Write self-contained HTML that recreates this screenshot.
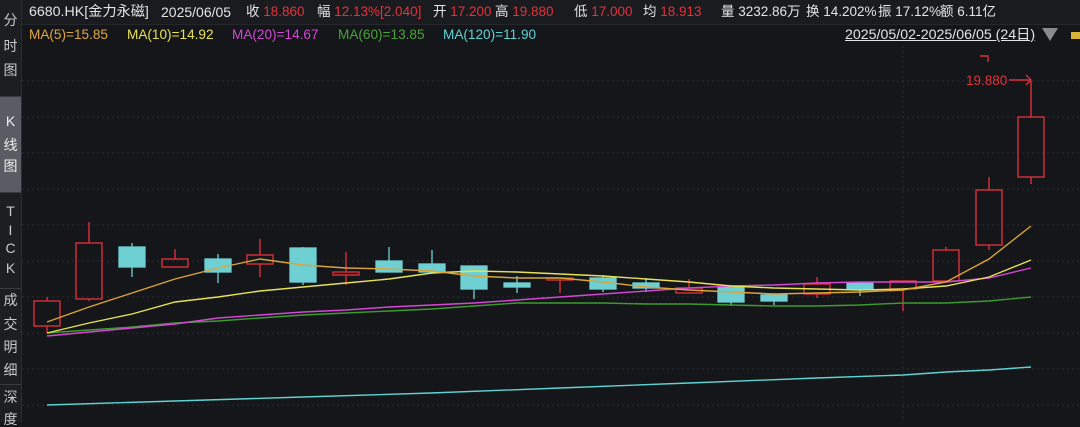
<!DOCTYPE html>
<html><head><meta charset="utf-8"><style>
body{margin:0;width:1080px;height:422px;background:#15161a;overflow:hidden;position:relative;font-family:"Liberation Sans","Noto Sans CJK SC",sans-serif}
#side{position:absolute;left:0;top:0;width:21px;height:422px;background:#1d1e22;border-right:1px solid #2c2d32}
.c{position:absolute;left:0;width:21px;text-align:center;color:#c9c9cc;font-size:14px;line-height:14px}
.h{position:absolute;top:0;font-size:13.5px;line-height:24px;color:#e4e4e6;white-space:nowrap}
.r{color:#e2323a}
.m{position:absolute;top:26px;font-size:13.6px;line-height:18px;white-space:nowrap}
</style></head><body>
<div style="position:absolute;left:22px;top:0;width:1058px;height:24px;background:#1a1b1f;border-bottom:1px solid #26272c"></div>
<div id="side">
<div style="position:absolute;top:97px;height:95px;left:0;width:21px;background:#5b5c63"></div>
<div style="position:absolute;top:96px;width:21px;height:1px;background:#3a3b40"></div>
<div style="position:absolute;top:192px;width:21px;height:1px;background:#3a3b40"></div>
<div style="position:absolute;top:288px;width:21px;height:1px;background:#3a3b40"></div>
<div style="position:absolute;top:384px;width:21px;height:1px;background:#3a3b40"></div>
<div class="c" style="top:13px">分</div><div class="c" style="top:39px">时</div><div class="c" style="top:63px">图</div>
<div class="c" style="top:114px;color:#eee">K</div><div class="c" style="top:138px;color:#eee">线</div><div class="c" style="top:159px;color:#eee">图</div>
<div class="c" style="top:204px">T</div><div class="c" style="top:223px">I</div><div class="c" style="top:241px">C</div><div class="c" style="top:261px">K</div>
<div class="c" style="top:293px">成</div><div class="c" style="top:317px">交</div><div class="c" style="top:340px">明</div><div class="c" style="top:363px">细</div>
<div class="c" style="top:390px">深</div><div class="c" style="top:412px">度</div>
</div>
<span class="h" style="left:29px;font-size:14.2px">6680.HK[金力永磁]</span>
<span class="h" style="left:161px;font-size:14px">2025/06/05</span>
<span class="h" style="left:246px">收 <span class="r">18.860</span></span>
<span class="h" style="left:317px">幅 <span class="r">12.13%[2.040]</span></span>
<span class="h" style="left:433px">开 <span class="r">17.200</span></span>
<span class="h" style="left:495px">高 <span class="r">19.880</span></span>
<span class="h" style="left:574px">低 <span class="r">17.000</span></span>
<span class="h" style="left:643px">均 <span class="r">18.913</span></span>
<span class="h" style="left:721px">量 3232.86万</span>
<span class="h" style="left:806px">换 14.202%</span>
<span class="h" style="left:878px">振 17.12%</span>
<span class="h" style="left:940px">额 6.11亿</span>
<span class="m" style="left:29px;color:#e0a83c">MA(5)=15.85</span>
<span class="m" style="left:127px;color:#e6e157">MA(10)=14.92</span>
<span class="m" style="left:232px;color:#d447d4">MA(20)=14.67</span>
<span class="m" style="left:338px;color:#4aa33a">MA(60)=13.85</span>
<span class="m" style="left:443px;color:#5fd3d3">MA(120)=11.90</span>
<span class="m" style="left:845px;color:#e4e4e6;text-decoration:underline;font-size:14.2px">2025/05/02-2025/06/05 (24日)</span>
<svg style="position:absolute;left:0;top:0" width="1080" height="422">
<polygon points="1042,28 1058,28 1050,41" fill="#8a8a8e"/>
<rect x="1071" y="32" width="9" height="7" fill="#d9b23a"/>
<g stroke="#2b2c31" stroke-dasharray="2,3" stroke-width="1">
<line x1="22" y1="81" x2="1080" y2="81"/><line x1="22" y1="117" x2="1080" y2="117"/><line x1="22" y1="153" x2="1080" y2="153"/><line x1="22" y1="189" x2="1080" y2="189"/><line x1="22" y1="225" x2="1080" y2="225"/><line x1="22" y1="261" x2="1080" y2="261"/><line x1="22" y1="297" x2="1080" y2="297"/><line x1="22" y1="333" x2="1080" y2="333"/><line x1="22" y1="369" x2="1080" y2="369"/><line x1="22" y1="405" x2="1080" y2="405"/>
<line x1="903" y1="46" x2="903" y2="422"/>
</g>
<g fill="#6fd0d4" stroke="#6fd0d4" stroke-width="1.3">
<line x1="132" y1="243" x2="132" y2="277"/><rect x="119" y="247" width="26" height="20"/>
<line x1="218" y1="254" x2="218" y2="283"/><rect x="205" y="259" width="26" height="13"/>
<line x1="303" y1="247" x2="303" y2="285"/><rect x="290" y="248" width="26" height="34"/>
<line x1="389" y1="247" x2="389" y2="272"/><rect x="376" y="261" width="26" height="11"/>
<line x1="432" y1="250" x2="432" y2="274"/><rect x="419" y="264" width="26" height="8"/>
<line x1="474" y1="266" x2="474" y2="299"/><rect x="461" y="266" width="26" height="23"/>
<line x1="517" y1="276" x2="517" y2="293"/><rect x="504" y="283" width="26" height="4"/>
<line x1="603" y1="275" x2="603" y2="292"/><rect x="590" y="278" width="26" height="11"/>
<line x1="646" y1="278" x2="646" y2="292"/><rect x="633" y="283" width="26" height="5"/>
<line x1="731" y1="287" x2="731" y2="306"/><rect x="718" y="287" width="26" height="15"/>
<line x1="774" y1="293" x2="774" y2="305"/><rect x="761" y="295" width="26" height="6"/>
<line x1="860" y1="283" x2="860" y2="296"/><rect x="847" y="283" width="26" height="6"/>
</g>
<g fill="none" stroke="#d8303a" stroke-width="1.4">
<path d="M47 297V301M47 326V333"/><rect x="34" y="301" width="26" height="25"/>
<path d="M89 222V243M89 299V301"/><rect x="76" y="243" width="26" height="56"/>
<path d="M175 249V259"/><rect x="162" y="259" width="26" height="8"/>
<path d="M260 239V255M260 264V277"/><rect x="247" y="255" width="26" height="9"/>
<path d="M346 252V272M346 275V285"/><rect x="333" y="272" width="26" height="3"/>
<path d="M560 280V293"/><rect x="547" y="278" width="26" height="2"/>
<path d="M689 279V288"/><rect x="676" y="288" width="26" height="5"/>
<path d="M817 277V284M817 294V298"/><rect x="804" y="284" width="26" height="10"/>
<path d="M903 289V311"/><rect x="890" y="281" width="26" height="8"/>
<path d="M946 247V250"/><rect x="933" y="250" width="26" height="31"/>
<path d="M989 177V190M989 245V250"/><rect x="976" y="190" width="26" height="55"/>
<path d="M1031 81V117M1031 177V184"/><rect x="1018" y="117" width="26" height="60"/>
<path d="M980 56H988V62"/>
<path d="M1009 80H1031M1026 75L1031 80L1026 85"/>
</g>
<text x="966" y="85" fill="#e2323a" font-size="13.5" font-family="Liberation Sans">19.880</text>
<g fill="none" stroke-width="1.4">
<polyline stroke="#5fd3d3" points="47,405 175,401 303,397 431,393 560,388 689,383 817,378 903,375 946,372 989,370 1031,367"/>
<polyline stroke="#3d9a2e" points="47,333 89,330 132,327 175,323 218,321 260,318 303,315 346,313 389,311 432,309 474,306 517,303 560,303 603,303 646,304 689,304 731,305 774,306 817,306 860,305 903,303 946,303 989,301 1031,297"/>
<polyline stroke="#d447d4" points="47,336 89,332 132,328 175,324 218,318 260,315 303,312 346,310 389,307 432,305 474,303 517,300 560,297 603,294 646,291 689,288 731,286 774,285 817,283 860,282 903,282 946,282 989,278 1031,268"/>
<polyline stroke="#e6e157" points="47,333 89,323 132,314 175,302 218,297 260,291 303,287 346,283 389,279 432,273 474,271 517,272 560,274 603,276 646,279 689,282 731,286 774,288 817,289 860,290 903,289 946,286 989,277 1031,260"/>
<polyline stroke="#d9a43a" points="47,322 89,307 132,293 175,279 218,268 260,259 303,265 346,268 389,269 432,271 474,276 517,278 560,278 603,282 646,287 689,290 731,292 774,294 817,293 860,292 903,290 946,282 989,259 1031,226"/>
</g>
</svg>
</body></html>
